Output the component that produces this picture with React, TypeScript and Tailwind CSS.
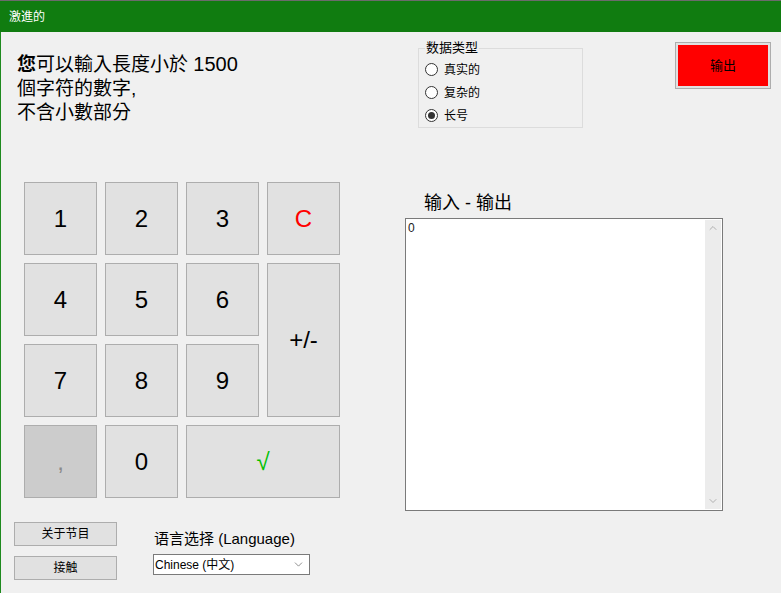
import { ChevronDown, ChevronUp } from 'lucide-react'

const font = { fontFamily: '"Liberation Sans", "Noto Sans CJK SC", sans-serif' }
const tcFont = { fontFamily: '"Liberation Sans", "Noto Sans CJK TC", sans-serif' }

const keys = [
  { label: '1' }, { label: '2' }, { label: '3' }, { label: 'C', tone: 'text-[#ff0000]' },
  { label: '4' }, { label: '5' }, { label: '6' }, { label: '+/-', span: 'row-span-2' },
  { label: '7' }, { label: '8' }, { label: '9' },
  { label: ',', disabled: true }, { label: '0' }, { label: '√', span: 'col-span-2', tone: 'text-[#00c000]' },
]

function Radio({ label, checked }: { label: string; checked?: boolean }) {
  return (
    <div className="flex items-center gap-[6px] h-[23px] text-[12px] text-black">
      <span className="w-[13px] h-[13px] rounded-full border border-[#333] bg-white flex items-center justify-center">
        {checked && <span className="w-[7px] h-[7px] rounded-full bg-[#333]" />}
      </span>
      {label}
    </div>
  )
}

export default function App() {
  return (
    <div className="w-[781px] h-[593px] bg-[#f0f0f0] flex flex-col overflow-hidden" style={font}>
      <div className="h-[32px] bg-[#107c10] border-t border-[#6b6b6b] flex items-center pl-[9px] text-[12px] text-white shrink-0">
        激進的
      </div>

      <div className="flex flex-1 border-l border-[#1e8a1e]">
        {/* left column */}
        <div className="w-[404px] flex flex-col">
          <div className="ml-[16px] mt-[20px] text-[19px] leading-[24px] text-black" style={tcFont}>
            <div><span className="font-bold">您</span>可以輸入長度小於 <span className="text-[20px]">1500</span></div>
            <div>個字符的數字,</div>
            <div>不含小數部分</div>
          </div>

          <div className="ml-[23px] mt-[57px] grid grid-cols-[73px_73px_73px_73px] grid-rows-[73px_73px_73px_73px] gap-[8px]">
            {keys.map((k) => (
              <div
                key={k.label}
                className={`border border-[#adadad] flex items-center justify-center text-[24px] ${k.span ?? ''} ${
                  k.disabled ? 'bg-[#cccccc] text-[#8a8a8a]' : 'bg-[#e1e1e1]'
                } ${k.tone ?? (k.disabled ? '' : 'text-black')}`}
              >
                {k.label}
              </div>
            ))}
          </div>

          <div className="flex mt-[24px]">
            <div className="ml-[13px] flex flex-col gap-[10px]">
              <div className="w-[103px] h-[24px] border border-[#adadad] bg-[#e1e1e1] flex items-center justify-center text-[12px] text-black">
                关于节目
              </div>
              <div className="w-[103px] h-[24px] border border-[#adadad] bg-[#e1e1e1] flex items-center justify-center text-[12px] text-black">
                接触
              </div>
            </div>
            <div className="ml-[36px] flex flex-col">
              <div className="ml-[1px] mt-[7px] text-[15px] leading-[20px] text-black">语言选择 (Language)</div>
              <div className="mt-[5px] w-[157px] h-[21px] border border-[#7a7a7a] bg-white flex items-center justify-between pl-[1px] pr-[4px] text-[12px] text-black">
                Chinese (中文)
                <ChevronDown size={13} strokeWidth={1.2} className="text-[#555]" />
              </div>
            </div>
          </div>
        </div>

        {/* right column */}
        <div className="flex-1 flex flex-col">
          <div className="flex">
            <fieldset className="ml-[13px] mt-[9px] w-[165px] h-[87px] border border-[#dcdcdc] pl-[6px] pt-[3px]">
              <legend className="px-[1px] text-[13px] leading-[14px] text-black">数据类型</legend>
              <Radio label="真实的" />
              <Radio label="复杂的" />
              <Radio label="长号" checked />
            </fieldset>
            <div className="ml-[92px] mt-[10px] w-[96px] h-[47px] border border-[#adadad] bg-[#e1e1e1] p-[2px]">
              <div className="w-full h-full bg-[#ff0000] flex items-center justify-center text-[13px] text-black">
                输出
              </div>
            </div>
          </div>

          <div className="ml-[19px] mt-[64px] text-[18px] leading-[22px] text-black">输入 - 输出</div>

          <div className="mt-[4px] w-[318px] h-[293px] border border-[#7a7a7a] bg-white flex">
            <div className="flex-1 pl-[2px] pt-[2px] text-[12px] leading-[14px] text-[#222]">0</div>
            <div className="w-[16px] my-[1px] mr-[1px] bg-[#ececec] flex flex-col items-center justify-between py-[2px]">
              <ChevronUp size={12} strokeWidth={2} className="text-[#b0b0b0]" />
              <ChevronDown size={12} strokeWidth={2} className="text-[#b0b0b0]" />
            </div>
          </div>
        </div>
      </div>
    </div>
  )
}
